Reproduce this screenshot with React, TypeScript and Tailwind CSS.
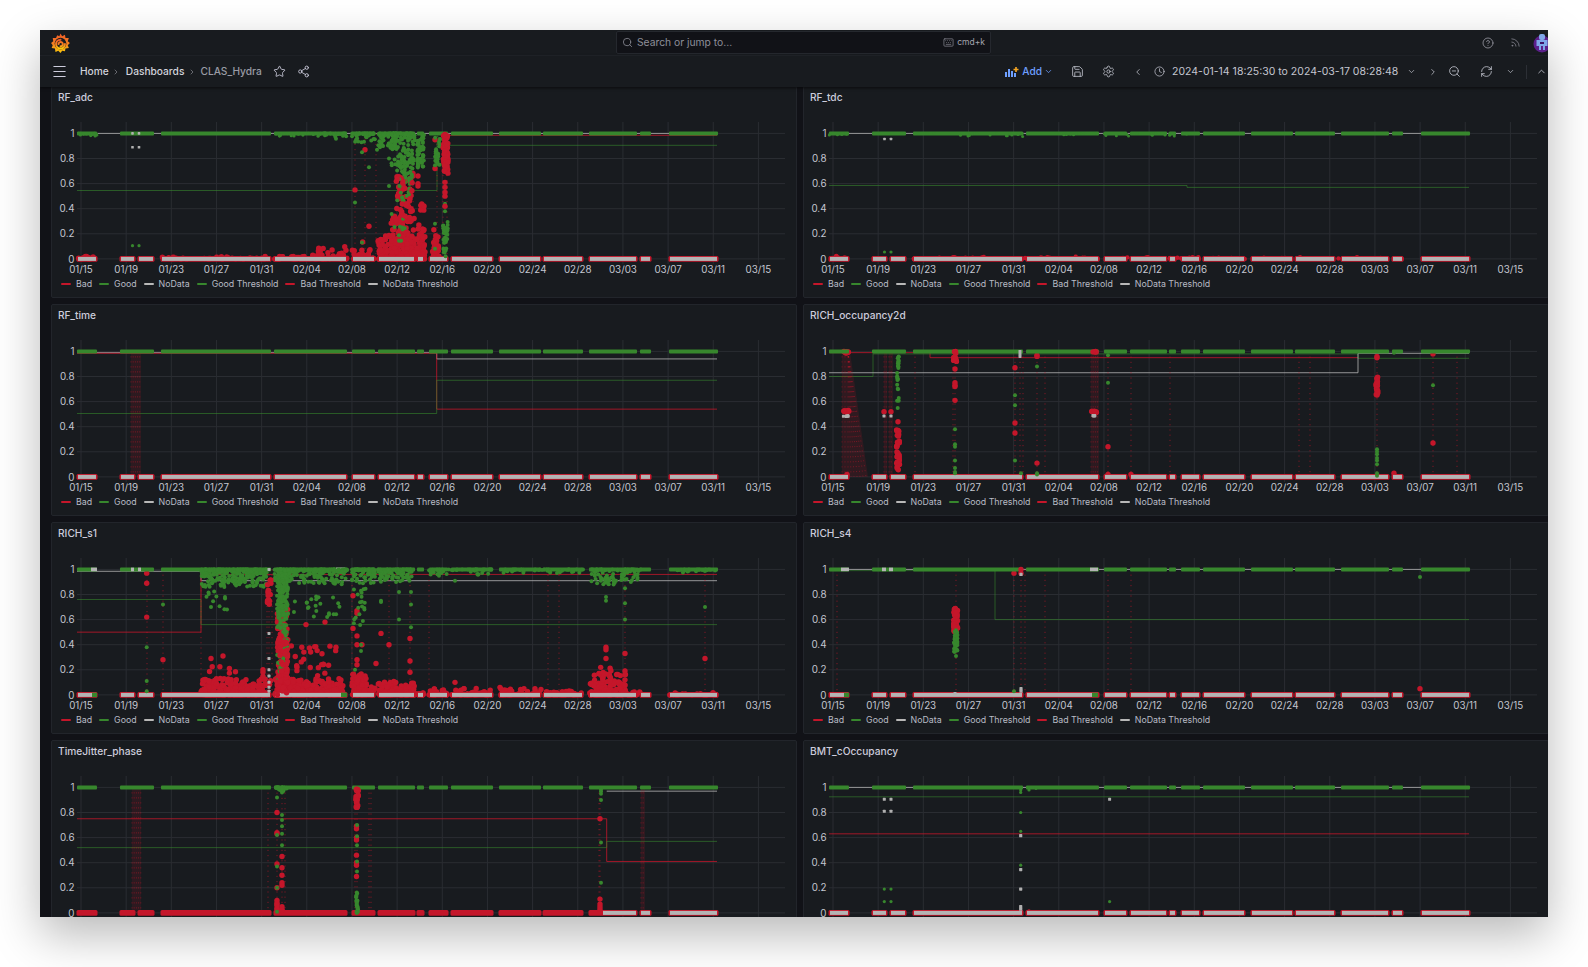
import React from "react";
import { Search, Keyboard, CircleHelp, Rss, Menu, ChevronRight, ChevronLeft, ChevronDown, ChevronUp, Star, Share2, Save, Settings, Clock, ZoomOut, RefreshCw } from "lucide-react";

const RED = "#c4162a";
const RED2 = "#c5172b";
const GREEN = "#37872d";
const GREY = "#b4b4b4";
const TICKS = ["01/15","01/19","01/23","01/27","01/31","02/04","02/08","02/12","02/16","02/20","02/24","02/28","03/03","03/07","03/11","03/15"];
const S: [number, number][] = [[26,46],[69,103],[110,220],[223,296],[301,324],[327,364],[366,373],[378,397],[400,442],[448,490],[492,532],[538,586],[589,600],[618,667]];
const SB: [number, number][] = [[26,46],[69,84],[87,103],[110,220],[223,296],[301,324],[327,364],[366,373],[378,397],[400,442],[448,490],[492,532],[538,586],[589,600],[618,667]];
const vy = (v: number) => 47.4 + (1 - v) * 125.5;
const tx = (i: number) => 30 + 45.16 * i;

type Dot = { x: number; v: number; c: string; r: number };
type Line = { c: string; pts: [number, number][] };
type Spec = {
  title: string;
  dots: Dot[];
  lines: Line[];
  dotted: number[];
  hatch?: [number, number][];
  wedge?: boolean;
  redUntil?: number;
  topGrey?: [number, number][];
  bottomGreen?: [number, number][];
};

function maker(seed: number) {
  let s = seed;
  const rnd = () => {
    s = (s + 0x6d2b79f5) | 0;
    let t = Math.imul(s ^ (s >>> 15), 1 | s);
    t = (t + Math.imul(t ^ (t >>> 7), 61 | t)) ^ t;
    return ((t ^ (t >>> 14)) >>> 0) / 4294967296;
  };
  const dots: Dot[] = [];
  const cl = (c: string, x0: number, x1: number, v0: number, v1: number, n: number, r = c === GREEN ? 2 : 2.7) => {
    for (let i = 0; i < n; i++) dots.push({ x: x0 + rnd() * (x1 - x0), v: v0 + rnd() * (v1 - v0), c, r });
  };
  const mound = (c: string, x0: number, x1: number, vmax: number, n: number, r = c === GREEN ? 2 : 2.7) => {
    for (let i = 0; i < n; i++) dots.push({ x: x0 + rnd() * (x1 - x0), v: Math.pow(rnd(), 2.6) * vmax, c, r });
  };
  const fuzz = (c: string, x0: number, x1: number, vmin: number, n: number, r = 2) => {
    for (let i = 0; i < n; i++) dots.push({ x: x0 + rnd() * (x1 - x0), v: 1 - Math.pow(rnd(), 2.6) * (1 - vmin), c, r });
  };
  const pt = (c: string, x: number, vs: number[], r = c === GREEN ? 2 : 2.7) => vs.forEach((v) => dots.push({ x, v, c, r }));
  return { dots, cl, mound, fuzz, pt };
}

const adc = (): Spec => {
  const m = maker(11);
  m.mound(RED, 26, 46, 0.03, 16);
  m.mound(RED, 110, 270, 0.02, 50);
  m.mound(RED, 225, 265, 0.03, 24);
  m.mound(RED, 265, 296, 0.1, 34);
  m.mound(RED, 301, 324, 0.08, 32);
  m.mound(RED, 327, 345, 0.2, 70);
  m.mound(RED, 340, 364, 0.34, 220);
  m.mound(RED, 366, 374, 0.28, 60);
  m.cl(RED, 345, 362, 0.3, 0.66, 40);
  m.cl(RED, 369, 373, 0.38, 0.44, 6);
  m.pt(RED, 362, [0.68, 0.66]);
  m.pt(RED, 367, [0.66, 0.6, 0.58]);
  m.cl(RED, 381, 388, 0, 0.24, 24);
  m.pt(RED, 384, [0.72, 0.95]);
  m.pt(RED, 314, [0.87]); m.pt(RED, 318, [0.26]); m.pt(RED, 311.7, [0.135]); m.pt(RED, 304, [0.55]); m.pt(RED, 328, [0.11]);
  m.fuzz(GREEN, 26, 46, 0.975, 16, 1.6);
  m.fuzz(GREEN, 225, 296, 0.975, 36, 1.6);
  m.fuzz(GREEN, 270, 296, 0.94, 14);
  m.fuzz(GREEN, 301, 324, 0.93, 40);
  m.fuzz(GREEN, 327, 345, 0.88, 46);
  m.fuzz(GREEN, 340, 364, 0.72, 100);
  m.cl(GREEN, 346, 362, 0.63, 0.86, 50);
  m.cl(GREEN, 366, 373, 0.72, 1, 55);
  m.cl(GREEN, 345, 360, 0.4, 0.62, 16);
  m.cl(GREEN, 340, 358, 0.05, 0.4, 10);
  m.pt(GREEN, 304, [0.45]); m.pt(GREEN, 318, [0.73]); m.pt(GREEN, 311, [0.85, 0.13]); m.pt(GREEN, 326, [0.87]); m.pt(GREEN, 338, [0.58]); m.pt(GREEN, 338, [0.8]);
  m.cl(GREEN, 384, 389, 0.74, 1, 26);
  m.cl(GREEN, 392, 397, 0.02, 0.3, 34);
  m.pt(GREEN, 394, [0.52, 0.44, 0.38]); m.pt(GREEN, 384, [0.28, 0.08]);
  m.pt(GREEN, 81.5, [0.105], 1.6); m.pt(GREEN, 88, [0.105], 1.6);
  m.cl(RED2, 345, 362, 0.32, 0.64, 16);
  m.cl(RED2, 392, 397, 0.68, 1, 70);
  m.pt(RED2, 394, [0.61, 0.57, 0.53, 0.5, 0.42]);
  m.pt(GREY, 81.5, [1, 0.89], 1.3); m.pt(GREY, 88, [1, 0.89], 1.3);
  return {
    title: "RF_adc", dots: m.dots, dotted: [304, 314, 325, 362, 386, 392, 396],
    lines: [
      { c: GREY, pts: [[26,1],[666,1]] },
      { c: RED, pts: [[386,1],[397,0.985],[666,0.985]] },
      { c: GREEN, pts: [[26,0.545],[386,0.545],[386,0.98],[397,0.905],[666,0.905]] },
    ],
  };
};

const tdc = (): Spec => {
  const m = maker(22);
  m.mound(RED, 26, 46, 0.03, 12, 2.4);
  m.mound(RED, 110, 600, 0.018, 110, 2.2);
  m.fuzz(GREEN, 26, 46, 0.98, 8, 1.5);
  m.fuzz(GREEN, 110, 390, 0.975, 50, 1.5);
  m.pt(GREY, 81.5, [0.955], 1.3); m.pt(GREY, 88, [0.955], 1.3);
  m.pt(GREEN, 81.5, [0.055], 1.6); m.pt(GREEN, 88, [0.055], 1.6);
  return {
    title: "RF_tdc", dots: m.dots, dotted: [],
    lines: [
      { c: GREY, pts: [[26,1],[666,1]] },
      { c: GREEN, pts: [[26,0.585],[384,0.585],[384,0.57],[666,0.57]] },
    ],
  };
};

const time = (): Spec => ({
  title: "RF_time", dots: [], dotted: [], hatch: [[80, 90]],
  lines: [
    { c: GREY, pts: [[26,0.99],[385.7,0.99],[385.7,0.94],[666,0.94]] },
    { c: RED, pts: [[26,0.985],[385.7,0.985],[385.7,0.54],[666,0.54]] },
    { c: GREEN, pts: [[26,0.505],[385.7,0.505],[385.7,0.77],[666,0.77]] },
  ],
});

const occ = (): Spec => {
  const m = maker(33);
  m.pt(RED, 44, [0.02]);
  m.cl(RED, 39, 47, 0.51, 0.53, 8); m.cl(GREY, 40, 46, 0.48, 0.49, 6, 1.5);
  m.pt(RED, 81, [0.52]); m.pt(GREY, 81, [0.485], 1.5);
  m.pt(RED, 88, [0.52]); m.pt(GREY, 88, [0.485], 1.5);
  m.cl(RED, 40, 46, 0.985, 1, 8);
  m.cl(GREEN, 94, 96, 0.6, 0.96, 24);
  m.pt(GREEN, 94.7, [0.55]);
  m.cl(RED, 93.5, 96.5, 0.05, 0.38, 30); m.pt(RED, 95, [0.44]);
  m.cl(RED2, 150.5, 153.5, 0.92, 1, 12);
  m.pt(RED, 152, [0.86, 0.75, 0.73, 0.72, 0.61]);
  m.pt(GREEN, 152, [0.38, 0.26, 0.24, 0.13, 0.07, 0.04, 0.03]);
  m.pt(RED, 212, [0.87, 0.43, 0.35]);
  m.pt(GREEN, 212, [0.65, 0.57, 0.13]);
  m.pt(GREY, 217, [1, 0.98, 0.96], 1.5);
  m.pt(GREEN, 218, [0.03]);
  m.pt(RED, 234, [0.96, 0.97, 0.11]);
  m.pt(GREEN, 234, [0.88, 0.03, 0.02]);
  m.cl(RED, 288, 294, 0.51, 0.53, 8); m.cl(GREY, 288, 293, 0.485, 0.49, 5, 1.5); m.cl(RED2, 289, 295, 0.995, 1, 5);
  m.pt(RED, 305, [0.24, 0.02]);
  m.pt(GREEN, 305, [0.75, 0.97]);
  m.pt(RED, 328, [0.02]);
  m.cl(RED, 573, 575, 0.65, 0.8, 24); m.pt(RED, 574, [0.96, 0.95]);
  m.pt(GREEN, 574, [0.22, 0.2, 0.18, 0.15, 0.13, 0.1, 0.01, 0.03]);
  m.pt(RED, 591, [0.03]); m.pt(GREEN, 591, [0.99]);
  m.pt(RED, 630, [0.27, 0.98]);
  m.pt(GREEN, 630, [0.73]);
  return {
    title: "RICH_occupancy2d", dots: m.dots, dotted: [112, 152, 150, 212, 217, 220, 234, 242, 305, 328, 367, 496, 507, 574, 630, 654], hatch: [[81, 84], [86, 90], [288, 296]], wedge: true,
    lines: [
      { c: RED, pts: [[26,0.99],[127,0.99],[127,0.95],[555,0.95]] },
      { c: GREEN, pts: [[26,0.8],[70,0.8],[70,0.98],[555,0.98],[555,0.945],[666,0.945]] },
      { c: GREY, pts: [[26,0.83],[555,0.83],[555,0.985],[666,0.985]] },
    ],
  };
};

const s1 = (): Spec => {
  const m = maker(44);
  m.pt(RED, 95.7, [0.97, 0.89, 0.62]); m.pt(GREEN, 95.7, [0.38, 0.11, 0.03]);
  m.pt(RED, 112, [0.28]); m.pt(GREEN, 112, [0.72]);
  m.mound(RED, 150, 216, 0.13, 260);
  m.mound(RED, 158, 190, 0.24, 30);
  m.pt(RED, 160, [0.29]); m.pt(RED, 172, [0.31]);
  m.cl(RED, 226, 237, 0, 0.7, 130);
  m.mound(RED, 223, 292, 0.13, 300);
  m.cl(RED, 240, 285, 0.14, 0.42, 26);
  m.pt(RED, 255, [0.56]); m.pt(RED, 274, [0.58]);
  m.cl(RED, 301, 316, 0, 0.17, 70);
  m.pt(RED, 302, [0.79, 0.53]); m.pt(RED, 306, [0.67, 0.65, 0.47, 0.4, 0.28, 0.24]); m.pt(RED, 311, [0.4]); m.pt(RED, 330, [0.49]); m.pt(RED, 338, [0.4]); m.pt(RED, 359, [0.45, 0.27, 0.18]); m.pt(RED, 315, [0.13]); m.pt(RED, 325, [0.25]);
  m.mound(RED, 327, 364, 0.11, 130);
  m.mound(RED, 301, 324, 0.08, 50);
  m.mound(RED, 366, 373, 0.02, 8); m.mound(RED, 378, 397, 0.05, 22); m.mound(RED, 400, 442, 0.06, 40); m.mound(RED, 448, 490, 0.05, 38); m.mound(RED, 492, 532, 0.05, 38);
  m.pt(RED, 404, [0.1]); m.pt(RED, 413, [0.05]); m.pt(RED, 449, [0.06]); m.pt(RED, 473, [0.05]); m.pt(RED, 484, [0.05]);
  m.mound(RED, 538, 575, 0.17, 100); m.mound(RED, 544, 560, 0.26, 24); m.pt(RED, 555, [0.38, 0.36, 0.29]); m.pt(RED, 574, [0.33, 0.19, 0.16, 0.12, 0.08]); m.pt(RED, 654, [0.29]);
  m.mound(RED, 575, 590, 0.04, 12); m.mound(RED, 618, 667, 0.02, 24);
  m.pt(RED, 212, [0.2, 0.18, 0.15]); m.cl(RED, 217, 220, 0.08, 0.12, 3);
  m.fuzz(GREEN, 150, 216, 0.86, 260); m.cl(GREEN, 155, 175, 0.66, 0.85, 10);
  m.pt(GREEN, 176, [0.68]); m.pt(GREEN, 160, [0.7]);
  m.cl(GREEN, 226, 237, 0.62, 1, 170); m.cl(GREEN, 226, 236, 0.12, 0.62, 55);
  m.fuzz(GREEN, 223, 296, 0.88, 200); m.cl(GREEN, 240, 290, 0.62, 0.85, 22); m.pt(GREEN, 233, [0.64]);
  m.fuzz(GREEN, 301, 324, 0.88, 70); m.cl(GREEN, 301, 315, 0.55, 0.85, 20); m.pt(GREEN, 304, [0.2]); m.pt(GREEN, 310, [0.4, 0.35]);
  m.fuzz(GREEN, 327, 364, 0.9, 90); m.pt(GREEN, 348, [0.6, 0.82]); m.pt(GREEN, 330, [0.75, 0.74]); m.pt(GREEN, 360, [0.82, 0.72, 0.54]);
  m.fuzz(GREEN, 378, 442, 0.955, 44); m.pt(GREEN, 404, [0.91]); m.fuzz(GREEN, 448, 532, 0.965, 40); m.pt(GREEN, 388, [0.95]);
  m.fuzz(GREEN, 538, 590, 0.9, 70); m.cl(GREEN, 544, 565, 0.86, 0.94, 20); m.pt(GREEN, 555, [0.78, 0.75]); m.pt(GREEN, 574, [0.92, 0.85, 0.6, 0.73]); m.pt(GREEN, 654, [0.7]);
  m.fuzz(GREEN, 618, 667, 0.975, 20);
  m.cl(RED2, 226, 237, 0, 0.46, 45);
  m.cl(RED2, 216, 220, 0.72, 0.97, 14);
  m.pt(GREY, 218, [1, 0.49, 0.29, 0.2, 0.15, 0.1, 0.06, 0.03], 1.5);
  return {
    title: "RICH_s1", dots: m.dots, dotted: [96, 112, 150, 216, 218, 221, 301, 338, 359, 378, 497, 508, 574, 654],
    topGrey: [[40,46],[80,83],[87,90],[285,294]], bottomGreen: [[41,46],[290,296]],
    lines: [
      { c: GREY, pts: [[26,0.985],[150,0.985],[150,0.91],[666,0.91]] },
      { c: RED, pts: [[26,0.5],[150,0.5],[150,0.96],[666,0.96]] },
      { c: GREEN, pts: [[26,0.76],[150,0.76],[150,0.56],[666,0.56]] },
    ],
  };
};

const s4 = (): Spec => {
  const m = maker(55);
  m.cl(RED, 150.5, 155, 0.5, 0.69, 50);
  m.cl(GREEN, 151, 154.5, 0.34, 0.52, 36);
  m.pt(GREEN, 153, [0.31]);
  m.pt(RED, 211, [0.97]); m.pt(RED2, 218, [1, 0.97]); m.pt(GREY, 218, [0.96, 0.03, 0.05], 1.6);
  m.pt(GREEN, 211, [0.03]);
  m.pt(GREY, 152, [0.01], 1.6);
  m.pt(GREEN, 617, [0.94]); m.pt(RED, 617, [0.05]);
  return {
    title: "RICH_s4", dots: m.dots, dotted: [34, 153, 211, 218, 222, 242, 305, 328],
    topGrey: [[38,46],[79,83],[86,90],[287,295]], bottomGreen: [[41,46],[289,295]],
    lines: [
      { c: GREY, pts: [[26,1],[666,1]] },
      { c: GREEN, pts: [[26,0.99],[192,0.99],[192,0.6],[666,0.6]] },
    ],
  };
};

const jitter = (): Spec => {
  const m = maker(66);
  m.pt(RED, 226, [0.8, 0.64, 0.63, 0.39, 0.2, 0.1, 0.08, 0.07, 0.06, 0.04, 0.03]);
  m.pt(RED, 231, [0.45, 0.36, 0.3, 0.24, 0.22, 0.05, 0.03, 0.02]);
  m.fuzz(GREEN, 225, 236, 0.97, 24); m.pt(GREEN, 226, [0.92, 0.62, 0.37, 0.2, 0.01]); m.pt(GREEN, 231, [0.99, 0.96, 0.78, 0.74, 0.69, 0.63, 0.54]);
  m.cl(RED2, 305, 307.5, 0.84, 1, 26); m.pt(RED, 305.5, [0.69, 0.67, 0.6, 0.58, 0.46, 0.4, 0.38, 0.29]);
  m.pt(GREEN, 306, [0.98, 0.7, 0.61, 0.54, 0.41, 0.33]); m.cl(GREEN, 305, 307, 0, 0.17, 22);
  m.pt(RED, 549, [0.75, 0.11, 0.07, 0.05, 0.03]); m.pt(GREEN, 550, [0.985, 0.97, 0.95, 0.9, 0.56, 0.24]);
  return {
    title: "TimeJitter_phase", dots: m.dots, dotted: [217, 226, 231, 234, 306, 304, 318, 320, 549, 548], hatch: [[81, 90], [590, 594]], redUntil: 552,
    lines: [
      { c: RED, pts: [[26,0.75],[555.7,0.75],[555.7,0.41],[666,0.41]] },
      { c: GREEN, pts: [[26,0.52],[555.7,0.52],[555.7,0.57],[666,0.57]] },
      { c: GREY, pts: [[555.7,0.97],[666,0.97]] },
    ],
  };
};

const bmt = (): Spec => {
  const m = maker(77);
  m.pt(GREY, 81.3, [0.905, 0.81], 1.5); m.pt(GREY, 88, [0.905, 0.81], 1.5);
  m.pt(GREEN, 81.3, [0.19, 0.09], 1.6); m.pt(GREEN, 88, [0.19, 0.09], 1.6);
  m.pt(GREEN, 217.7, [0.98, 0.96, 0.8, 0.65, 0.38], 1.6); m.pt(GREY, 217.7, [0.615, 0.345, 0.19, 0.05, 0.03], 1.6);
  m.pt(GREEN, 226, [0.98], 1.6); m.pt(GREEN, 233, [0.99], 1.4);
  m.pt(GREY, 306.6, [0.905], 1.5); m.pt(GREEN, 306.6, [0.09], 1.6);
  m.pt(RED, 226, [0.015], 1.8); m.mound(RED, 224, 236, 0.01, 4, 1.6); m.pt(RED, 303, [0.008], 1.7);
  return {
    title: "BMT_cOccupancy", dots: m.dots, dotted: [],
    lines: [
      { c: GREY, pts: [[26,1],[666,1]] },
      { c: GREEN, pts: [[26,0.925],[666,0.925]] },
      { c: RED, pts: [[26,0.63],[666,0.63]] },
    ],
  };
};

const LEGEND: [string, string][] = [["Bad", RED], ["Good", GREEN], ["NoData", "#b8b8b8"], ["Good Threshold", GREEN], ["Bad Threshold", RED], ["NoData Threshold", "#b8b8b8"]];

function Chart({ spec }: { spec: Spec }) {
  const hatchDots: React.ReactNode[] = [];
  (spec.hatch ?? []).forEach(([a, b], h) => {
    hatchDots.push(<rect key={`hr${h}`} x={a} y={vy(1)} width={b - a} height={vy(0) - vy(1)} fill={RED} opacity={0.13} />);
    for (let x = a; x <= b; x += 2.2) {
      hatchDots.push(<line key={`h${h}-${x}`} x1={x} x2={x} y1={vy(1)} y2={vy(0)} stroke={RED} strokeWidth={1} strokeDasharray="1 4" opacity={0.55} />);
    }
  });
  const reds = spec.dots.filter((d) => d.c === RED);
  const reds2 = spec.dots.filter((d) => d.c === RED2);
  const greens = spec.dots.filter((d) => d.c === GREEN);
  const greys = spec.dots.filter((d) => d.c === GREY);
  return (
    <svg viewBox="0 24 746 166" className="block w-[746px] h-[166px] shrink-0 -ml-px">
      {[0, 0.2, 0.4, 0.6, 0.8, 1].map((v) => (
        <g key={v}>
          <line x1={26} x2={734} y1={vy(v)} y2={vy(v)} stroke="#2a2d32" strokeWidth={1} />
          <text x={23.5} y={vy(v) + 3.6} textAnchor="end" className="fill-[#c4c6d0] text-[9.8px]">{v}</text>
        </g>
      ))}
      {TICKS.map((t, i) => (
        <g key={t}>
          <line x1={tx(i)} x2={tx(i)} y1={36} y2={178} stroke="#2a2d32" strokeWidth={1} />
          <text x={tx(i)} y={187} textAnchor="middle" className="fill-[#c4c6d0] text-[9.8px]">{t}</text>
        </g>
      ))}
      {spec.lines.map((l, i) => (
        <polyline key={i} fill="none" stroke={l.c} strokeWidth={1} opacity={l.c === GREEN ? 0.6 : 0.8} points={l.pts.map(([x, v]) => `${x},${vy(v)}`).join(" ")} />
      ))}
      {spec.wedge && <polygon points={`39,${vy(1)} 47,${vy(1)} 65,${vy(0)} 39,${vy(0)}`} fill={RED} opacity={0.14} />}
      {spec.wedge && [39, 42, 45, 48, 51, 54, 57, 60, 63].map((x) => (
        <line key={x} x1={Math.min(x, 45)} x2={x} y1={vy(1)} y2={vy(0)} stroke={RED} strokeWidth={1} strokeDasharray="1 4" opacity={0.5} />
      ))}
      {hatchDots}
      {spec.dotted.map((x, i) => (
        <line key={i} x1={x} x2={x} y1={vy(1)} y2={vy(0)} stroke={RED} strokeWidth={1} strokeDasharray="1.2 4" opacity={0.6} />
      ))}
      {SB.map(([a, b], i) => (
        <rect key={i} x={a - 0.5} y={vy(0) - 2.9} width={b - a + 1} height={5.8} rx={1.5} fill={RED} />
      ))}
      {reds.map((d, i) => <circle key={i} cx={d.x} cy={vy(d.v)} r={d.r} fill={d.c} />)}
      {SB.map(([a, b], i) => {
        const start = Math.max(a + 1, spec.redUntil ?? 0);
        return start < b - 1 ? <rect key={i} x={start} y={vy(0) - 2} width={b - start - 1} height={4} fill={GREY} /> : null;
      })}
      {(spec.bottomGreen ?? []).map(([a, b], i) => (
        <rect key={i} x={a} y={vy(0) - 2.2} width={b - a} height={4.4} fill={GREEN} />
      ))}
      {S.map(([a, b], i) => (
        <rect key={i} x={a} y={vy(1) - 2} width={b - a} height={4.2} rx={1} fill={GREEN} />
      ))}
      {(spec.topGrey ?? []).map(([a, b], i) => (
        <rect key={i} x={a} y={vy(1) - 1.8} width={b - a} height={3.6} fill={GREY} />
      ))}
      {greens.map((d, i) => <circle key={i} cx={d.x} cy={vy(d.v)} r={d.r} fill={d.c} />)}
      {reds2.map((d, i) => <circle key={i} cx={d.x} cy={vy(d.v)} r={d.r} fill={d.c} />)}
      {greys.map((d, i) => <rect key={i} x={d.x - d.r} y={vy(d.v) - d.r} width={d.r * 2} height={d.r * 2} rx={0.6} fill="#b0b0b0" />)}
    </svg>
  );
}

function Panel({ spec }: { spec: Spec }) {
  return (
    <section className="w-[746px] h-[212px] shrink-0 overflow-hidden bg-[#181b1f] border border-[#22252b] rounded-[2px] flex flex-col box-border -mx-px">
      <h2 className="h-[23px] shrink-0 pl-[6px] pt-[3px] text-[10.2px] leading-[14px] font-medium text-[#ccccdc]">{spec.title}</h2>
      <Chart spec={spec} />
      <div className="flex items-center h-[16px] pl-[9px] text-[8.8px] leading-[14px] text-[#b9bbc6]">
        {LEGEND.map(([name, color]) => (
          <span key={name} className="flex items-center mr-[7px]">
            <span className="w-[10px] h-[2.5px] rounded-[1px] mr-[5px]" style={{ backgroundColor: color }} />
            {name}
          </span>
        ))}
      </div>
    </section>
  );
}

function GrafanaLogo() {
  return (
    <svg width="19" height="20" viewBox="0 0 34 36" aria-hidden="true">
      <defs>
        <linearGradient id="gf" x1="0" y1="1" x2="0" y2="0">
          <stop offset="0" stopColor="#fbca0a" />
          <stop offset="0.45" stopColor="#f58220" />
          <stop offset="1" stopColor="#f05a28" />
        </linearGradient>
      </defs>
      <path fill="url(#gf)" d="M17 1l3 5 5-3 1 6 6 0-2 6 4 3-4 4 2 5-6 1-1 5-5-1-3 4-4-4-5 2-1-6-6-1 2-5-3-4 4-3-1-6 6 0 2-5 4 2z" />
      <circle cx="17" cy="19" r="10.5" fill="#181b1f" />
      <path fill="none" stroke="url(#gf)" strokeWidth="3.6" strokeLinecap="round" d="M25 20a8 8 0 1 1-8-8M13.5 20a3.8 3.8 0 1 1 3.6 3.8" />
    </svg>
  );
}

function AddIcon() {
  return (
    <svg width="14" height="12" viewBox="0 0 14 12" aria-hidden="true">
      <rect x="0" y="6" width="2" height="5" fill="#6e9fff" />
      <rect x="3" y="3" width="2" height="8" fill="#6e9fff" />
      <rect x="6" y="5" width="2" height="6" fill="#6e9fff" />
      <rect x="9" y="7" width="2" height="4" fill="#6e9fff" />
      <path d="M11 1v5M8.5 3.5h5" stroke="#f5a623" strokeWidth="1.6" />
    </svg>
  );
}

function Avatar() {
  return (
    <svg width="18" height="20" viewBox="0 0 18 20" aria-hidden="true">
      <circle cx="9" cy="11" r="8.5" fill="#5b1f8a" />
      <rect x="6" y="1" width="6" height="6" rx="2" fill="#7fa6e8" />
      <rect x="3.5" y="7" width="11" height="6" fill="#7fa6e8" />
      <rect x="6" y="13" width="2" height="4" fill="#7fa6e8" />
      <rect x="10" y="13" width="2" height="4" fill="#7fa6e8" />
      <rect x="7" y="9" width="4" height="2" fill="#3d1366" />
    </svg>
  );
}

export default function App() {
  const panels = [adc(), tdc(), time(), occ(), s1(), s4(), jitter(), bmt()];
  return (
    <div className="w-[1588px] h-[967px] bg-white pl-[40px] pt-[30px] overflow-hidden font-[family-name:Inter,sans-serif]">
      <div className="w-[1508px] h-[887px] bg-[#111217] flex flex-col overflow-hidden shadow-[0_18px_44px_rgba(0,0,0,0.28)]">
        <header className="h-[26px] shrink-0 flex items-center bg-[#181b1f] border-b border-[#22252b] relative z-10 overflow-hidden">
          <span className="ml-[10px] w-[20px] shrink-0 flex justify-center"><GrafanaLogo /></span>
          <div className="ml-[546px] w-[375px] shrink-0 h-[23px] flex items-center bg-[#111217] border border-[#25282e] rounded-[2px] text-[#8e8f99]">
            <Search size={11} className="ml-[5px]" strokeWidth={1.7} />
            <span className="ml-[4px] text-[10.3px]">Search or jump to...</span>
            <Keyboard size={11} className="ml-auto" strokeWidth={1.5} />
            <span className="ml-[3px] mr-[5px] text-[8.5px] text-[#a4a5ae]">cmd+k</span>
          </div>
          <CircleHelp size={12} className="ml-[491px] shrink-0 text-[#9a9ba5]" strokeWidth={1.6} />
          <Rss size={11} className="ml-[16px] shrink-0 text-[#8e8f99]" strokeWidth={1.6} />
          <span className="ml-[12px] shrink-0 flex"><Avatar /></span>
        </header>
        <nav className="h-[31px] shrink-0 flex items-center bg-[#181b1f] shadow-[0_1px_3px_rgba(0,0,0,0.6)] relative z-10 text-[10.2px]">
          <Menu size={17} className="ml-[11px] text-[#ccccdc]" strokeWidth={1.5} />
          <span className="ml-[12px] text-[#d2d3dc] font-medium">Home</span>
          <ChevronRight size={8} className="mx-[3px] text-[#8e8f99]" strokeWidth={2} />
          <span className="ml-[3px] text-[#d2d3dc] font-medium">Dashboards</span>
          <ChevronRight size={8} className="mx-[4px] text-[#8e8f99]" strokeWidth={2} />
          <span className="text-[#9a9ba5] font-medium">CLAS_Hydra</span>
          <Star size={13} className="ml-[11px] text-[#ccccdc]" strokeWidth={1.6} />
          <Share2 size={13} className="ml-[11px] text-[#ccccdc]" strokeWidth={1.6} />
          <div className="ml-auto flex items-center text-[#c4c6d0]">
            <AddIcon />
            <span className="ml-[3px] text-[#6e9fff] font-medium">Add</span>
            <ChevronDown size={9} className="ml-[2px] text-[#6e9fff]" strokeWidth={2} />
            <Save size={13} className="ml-[18px]" strokeWidth={1.5} />
            <Settings size={13} className="ml-[18px]" strokeWidth={1.5} />
            <ChevronLeft size={10} className="ml-[18px]" strokeWidth={1.8} />
            <Clock size={11} className="ml-[11px]" strokeWidth={1.6} />
            <span className="ml-[7px] w-[227px] whitespace-nowrap text-[10.5px]">2024-01-14 18:25:30 to 2024-03-17 08:28:48</span>
            <ChevronDown size={9} className="ml-[8px]" strokeWidth={1.8} />
            <ChevronRight size={10} className="ml-[12px]" strokeWidth={1.8} />
            <ZoomOut size={13} className="ml-[10px]" strokeWidth={1.5} />
            <RefreshCw size={13} className="ml-[19px]" strokeWidth={1.5} />
            <ChevronDown size={9} className="ml-[13px]" strokeWidth={1.8} />
            <span className="ml-[11px] w-px h-[14px] bg-[#2c2f35]" />
            <ChevronUp size={11} className="ml-[9px] mr-[1px]" strokeWidth={1.8} />
          </div>
        </nav>
        <main className="flex-1 min-h-0 overflow-hidden pl-[12px] -mt-px">
          <div className="grid grid-cols-[746px_746px] gap-x-[6px] gap-y-[6px] w-[1498px]">
            {panels.map((p) => <Panel key={p.title} spec={p} />)}
          </div>
        </main>
      </div>
    </div>
  );
}
